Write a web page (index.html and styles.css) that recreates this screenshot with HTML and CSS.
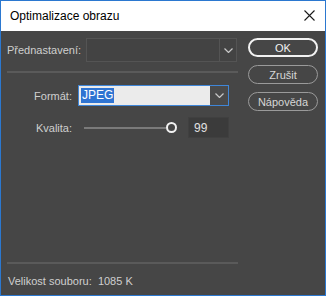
FILE: index.html
```html
<!DOCTYPE html>
<html>

<head>
  <meta charset="utf-8" />
  <title>Optimalizace obrazu</title>
  <link rel="stylesheet" href="styles.css">
</head>

<body>
  <div class="window">
    <div class="titlebar">
      <span class="title">Optimalizace obrazu</span>
      <svg class="close" width="11" height="11" viewBox="0 0 11 11">
        <path d="M0.5 0.5 L10.5 10.5 M10.5 0.5 L0.5 10.5" stroke="#1a1a1a" stroke-width="1.1" fill="none" />
      </svg>
    </div>

    <div class="content">
      <div class="main">
        <div class="preset">
          <span class="preset-label">Přednastavení:</span>
          <div class="preset-select">
            <div class="preset-value"></div>
            <div class="preset-arrow">
              <svg width="9" height="5" viewBox="0 0 9 5"><path d="M0.5 0.5 L4.5 4.5 L8.5 0.5" stroke="#c8c8c8" stroke-width="1.2" fill="none" /></svg>
            </div>
          </div>
        </div>
        <div class="sep"></div>

        <div class="options">
          <span class="opt-label">Formát:</span>
          <div class="format-select">
            <div class="format-value"><span class="selected">JPEG</span></div>
            <div class="format-arrow">
              <svg width="9" height="5" viewBox="0 0 9 5"><path d="M0.5 0.5 L4.5 4.5 L8.5 0.5" stroke="#c8c8c8" stroke-width="1.2" fill="none" /></svg>
            </div>
          </div>

          <span class="opt-label">Kvalita:</span>
          <div class="quality">
            <div class="slider">
              <div class="track"></div>
              <div class="thumb"></div>
            </div>
            <div class="num">99</div>
          </div>
        </div>

        <div class="sep bottom"></div>
        <p class="size">Velikost souboru:&nbsp; 1085 K</p>
      </div>

      <div class="buttons">
        <button class="btn default">OK</button>
        <button class="btn">Zrušit</button>
        <button class="btn">Nápověda</button>
      </div>
    </div>
  </div>
</body>

</html>
```

FILE: styles.css
```css
* {
  box-sizing: border-box;
}

body {
  margin: 0;
  font-family: "Liberation Sans", Arial, sans-serif;
  font-size: 11px;
}

.window {
  width: 326px;
  height: 296px;
  border: 1px solid #2b78d0;
  display: flex;
  flex-direction: column;
  background: #464646;
}

.titlebar {
  height: 30px;
  background: white;
  display: flex;
  align-items: center;
  justify-content: space-between;
  padding: 0 10px 0 9px;
}

.title {
  font-size: 12px;
  color: #000;
  padding-bottom: 1px;
}

.close {
  margin-bottom: 1px;
}

.content {
  flex: 1;
  display: flex;
  padding: 7px 7px 0 6px;
  gap: 10px;
  color: #cfcfcf;
}

.main {
  width: 231px;
  display: flex;
  flex-direction: column;
}

.preset {
  display: flex;
  align-items: center;
  height: 24px;
}

.preset-label {
  width: 79px;
}

.preset-select {
  width: 151px;
  height: 24px;
  display: flex;
  border: 1px solid #545454;
  background: #434343;
}

.preset-value {
  flex: 1;
}

.preset-arrow {
  width: 17px;
  border-left: 1px solid #545454;
  display: flex;
  align-items: center;
  justify-content: center;
}

.sep {
  height: 2px;
  background: #5a5a5a;
  margin-top: 9px;
}

.options {
  display: grid;
  grid-template-columns: 65px 151px;
  column-gap: 6px;
  row-gap: 11px;
  margin-top: 12px;
  align-items: center;
}

.opt-label {
  text-align: right;
}

.format-select {
  height: 21px;
  display: flex;
  border: 1px solid #3f86d8;
  background: #ebebeb;
}

.format-value {
  flex: 1;
  display: flex;
  align-items: center;
  padding-left: 2px;
}

.selected {
  background: #2f74d2;
  color: white;
  font-size: 12px;
  line-height: 15px;
  padding: 0 1px;
}

.format-arrow {
  width: 18px;
  background: #4a4a4a;
  display: flex;
  align-items: center;
  justify-content: center;
}

.quality {
  display: flex;
  align-items: center;
  height: 21px;
}

.slider {
  width: 104px;
  position: relative;
  height: 21px;
  display: flex;
  align-items: center;
  padding-left: 6px;
}

.track {
  width: 82px;
  height: 2px;
  background: #7a7a7a;
}

.thumb {
  width: 11px;
  height: 11px;
  border: 2px solid #f2f2f2;
  border-radius: 50%;
  margin-left: 0;
}

.num {
  margin-left: 6px;
  width: 41px;
  height: 21px;
  background: #3b3b3b;
  border: 1px solid #404040;
  display: flex;
  align-items: center;
  padding-left: 5px;
  font-size: 12px;
  color: #e0e0e0;
}

.sep.bottom {
  margin-top: auto;
}

.size {
  margin: 0;
  height: 31px;
  line-height: 34px;
  padding-left: 1px;
  white-space: pre;
}

.buttons {
  width: 70px;
  display: flex;
  flex-direction: column;
  gap: 8px;
}

.btn {
  height: 19px;
  border: 1px solid #9a9a9a;
  border-radius: 10px;
  background: transparent;
  color: #d6d6d6;
  font-family: "Liberation Sans", Arial, sans-serif;
  font-size: 11px;
  padding: 0;
}

.btn.default {
  border: 2px solid #f2f2f2;
  color: #f2f2f2;
}
```
